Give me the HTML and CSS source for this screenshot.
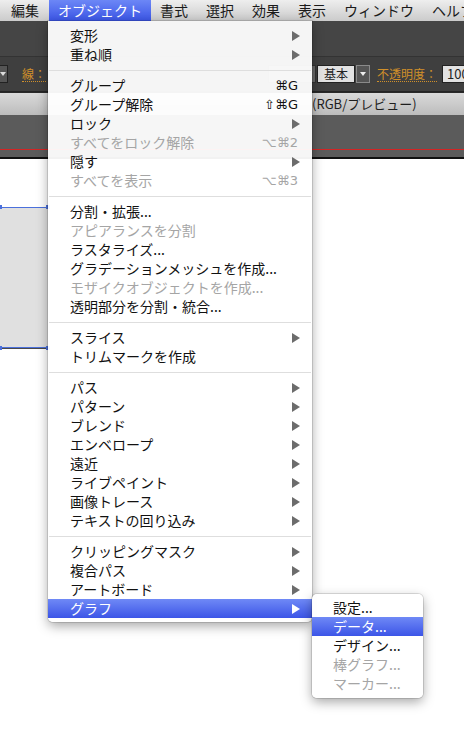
FILE: index.html
```html
<!DOCTYPE html>
<html lang="ja">
<head>
<meta charset="utf-8">
<link rel="stylesheet" href="styles.css">
</head>
<body>
<div class="page">
  <div class="menubar">
    <span class="mb-item first">編集</span>
    <span class="mb-item active">オブジェクト</span>
    <span class="mb-item">書式</span>
    <span class="mb-item">選択</span>
    <span class="mb-item">効果</span>
    <span class="mb-item">表示</span>
    <span class="mb-item">ウィンドウ</span>
    <span class="mb-item">ヘルプ</span>
  </div>
  <div class="appbar"></div>
  <div class="controlbar">
    <span class="ctl-dd-left"></span>
    <span class="ctl-label stroke">線：</span>
    <span class="ctl-field faint-field"></span>
    <span class="ctl-field basic">基本</span>
    <span class="ctl-dd"></span>
    <span class="ctl-label opacity">不透明度：</span>
    <span class="ctl-field pct">100%</span>
  </div>
  <div class="tabbar"><span class="doc-title">(RGB/プレビュー)</span></div>
  <div class="docarea"><div class="guide"></div></div>
  <div class="canvas">
    <div class="artwork">
      <span class="handle tl"></span><span class="handle tr"></span>
      <span class="handle bl"></span><span class="handle br"></span>
    </div>
  </div>
</div>

<div class="menu">
  <div class="item"><span>変形</span><i class="arrow"></i></div>
  <div class="item"><span>重ね順</span><i class="arrow"></i></div>
  <div class="sep"></div>
  <div class="item"><span>グループ</span><span class="key">⌘G</span></div>
  <div class="item"><span>グループ解除</span><span class="key">⇧⌘G</span></div>
  <div class="item"><span>ロック</span><i class="arrow"></i></div>
  <div class="item dis"><span>すべてをロック解除</span><span class="key">⌥⌘2</span></div>
  <div class="item"><span>隠す</span><i class="arrow"></i></div>
  <div class="item dis"><span>すべてを表示</span><span class="key">⌥⌘3</span></div>
  <div class="sep"></div>
  <div class="item"><span>分割・拡張...</span></div>
  <div class="item dis"><span>アピアランスを分割</span></div>
  <div class="item"><span>ラスタライズ...</span></div>
  <div class="item"><span>グラデーションメッシュを作成...</span></div>
  <div class="item dis"><span>モザイクオブジェクトを作成...</span></div>
  <div class="item"><span>透明部分を分割・統合...</span></div>
  <div class="sep"></div>
  <div class="item"><span>スライス</span><i class="arrow"></i></div>
  <div class="item"><span>トリムマークを作成</span></div>
  <div class="sep"></div>
  <div class="item"><span>パス</span><i class="arrow"></i></div>
  <div class="item"><span>パターン</span><i class="arrow"></i></div>
  <div class="item"><span>ブレンド</span><i class="arrow"></i></div>
  <div class="item"><span>エンベロープ</span><i class="arrow"></i></div>
  <div class="item"><span>遠近</span><i class="arrow"></i></div>
  <div class="item"><span>ライブペイント</span><i class="arrow"></i></div>
  <div class="item"><span>画像トレース</span><i class="arrow"></i></div>
  <div class="item"><span>テキストの回り込み</span><i class="arrow"></i></div>
  <div class="sep"></div>
  <div class="item"><span>クリッピングマスク</span><i class="arrow"></i></div>
  <div class="item"><span>複合パス</span><i class="arrow"></i></div>
  <div class="item"><span>アートボード</span><i class="arrow"></i></div>
  <div class="item sel"><span>グラフ</span><i class="arrow"></i></div>
</div>

<div class="submenu">
  <div class="item"><span>設定...</span></div>
  <div class="item sel"><span>データ...</span></div>
  <div class="item"><span>デザイン...</span></div>
  <div class="item dis"><span>棒グラフ...</span></div>
  <div class="item dis"><span>マーカー...</span></div>
</div>
</body>
</html>
```

FILE: styles.css
```css
html, body {
  margin: 0;
  padding: 0;
}
body {
  width: 464px;
  height: 729px;
  overflow: hidden;
  position: relative;
  background: #fff;
  font-family: "Noto Sans CJK JP", "Noto Sans", "DejaVu Sans", sans-serif;
  color: #111;
}
.page {
  display: flex;
  flex-direction: column;
  height: 729px;
}

/* menu bar */
.menubar {
  height: 21px;
  flex: none;
  display: flex;
  align-items: stretch;
  background: linear-gradient(#eeeeee, #cbcbcb);
  font-size: 14px;
  line-height: 21px;
  white-space: nowrap;
  overflow: hidden;
}
.mb-item {
  padding: 0 9px;
  color: #1a1a1a;
}
.mb-item.first {
  padding-left: 11px;
  padding-right: 10px;
}
.mb-item.active {
  color: #fff;
  background: linear-gradient(#6c87f6, #3b55e6);
}

/* dark application bars */
.appbar {
  height: 35px;
  flex: none;
  background: #454545;
  border-bottom: 1px solid #333;
}
.controlbar {
  height: 34px;
  flex: none;
  background: #3f3f3f;
  border-bottom: 1px solid #252525;
  display: flex;
  align-items: center;
  font-size: 12px;
  white-space: nowrap;
  overflow: hidden;
}
.ctl-dd-left {
  width: 7px;
  height: 16px;
  background: #555;
  border: 1px solid #222;
  border-left: none;
  position: relative;
  flex: none;
}
.ctl-dd-left::after {
  content: "";
  position: absolute;
  left: 0;
  top: 6px;
  border-top: 4px solid #ddd;
  border-left: 3px solid transparent;
  border-right: 3px solid transparent;
}
.ctl-label {
  color: #d1902a;
  border-bottom: 1px dotted #d1902a;
  line-height: 15px;
  flex: none;
}
.ctl-label.stroke { margin-left: 14px; }
.ctl-label.opacity { margin-left: 7px; }
.ctl-field {
  height: 16px;
  background: #e2e2e2;
  border: 1px solid #222;
  color: #222;
  line-height: 16px;
  flex: none;
}
.faint-field {
  width: 46px;
  margin-left: 222px;
  background: #6a6a6a;
  border-color: #333;
}
.basic {
  width: 36px;
  text-align: center;
  margin-left: 1px;
}
.ctl-dd {
  width: 12px;
  height: 16px;
  margin-left: 1px;
  background: #555;
  border: 1px solid #8a8a8a;
  position: relative;
  flex: none;
}
.ctl-dd::after {
  content: "";
  position: absolute;
  left: 3px;
  top: 6px;
  border-top: 4px solid #eee;
  border-left: 3px solid transparent;
  border-right: 3px solid transparent;
}
.pct {
  margin-left: 5px;
  width: 40px;
  padding-left: 4px;
  font-size: 13px;
}

.tabbar {
  height: 22px;
  flex: none;
  background: linear-gradient(#dadada, #bcbcbc);
  border-top: 1px solid #2a2a2a;
  font-size: 13px;
  line-height: 22px;
  white-space: nowrap;
  overflow: hidden;
}
.doc-title {
  padding-left: 312px;
  color: #1e1e1e;
}
.docarea {
  height: 42px;
  flex: none;
  background: #5b5b5b;
  border-bottom: 2px solid #111;
  display: flex;
  flex-direction: column;
  justify-content: flex-end;
}
.guide {
  height: 1px;
  background: #d42424;
  margin-bottom: 7px;
}
.canvas {
  flex: 1;
  position: relative;
  background: #fff;
}
.artwork {
  position: absolute;
  left: 0;
  top: 48px;
  width: 48px;
  height: 139px;
  background: #e0e0e0;
  border-top: 1px solid #4b70dc;
  border-bottom: 1px solid #4b70dc;
  box-shadow: 0 1px 0 #4a4a4a;
}
.handle {
  position: absolute;
  width: 4px;
  height: 4px;
  background: #4b70dc;
}
.handle.tl { left: -2px; top: -3px; }
.handle.tr { right: -2px; top: -3px; }
.handle.bl { left: -2px; bottom: -3px; }
.handle.br { right: -2px; bottom: -3px; }

/* drop-down menu */
.menu, .submenu {
  position: absolute;
  background: rgba(255, 255, 255, 0.95);
  box-shadow: 0 4px 12px rgba(0, 0, 0, 0.35), 0 0 0 1px rgba(0, 0, 0, 0.12);
  font-size: 14px;
  white-space: nowrap;
}
.menu {
  left: 48px;
  top: 21px;
  width: 264px;
  padding: 5px 0 4px;
  border-radius: 0 0 5px 5px;
}
.submenu {
  left: 312px;
  top: 594px;
  width: 111px;
  padding: 4px 0 5px;
  border-radius: 5px;
}
.item {
  height: 19px;
  line-height: 19px;
  display: flex;
  align-items: center;
  justify-content: space-between;
  padding: 0 12px 0 22px;
  color: #111;
}
.submenu .item { padding-left: 21px; }
.item.dis { color: #a5a5a5; }
.item.sel {
  color: #fff;
  background: linear-gradient(#6f89f6, #3c55e7);
}
.key {
  margin-right: 2px;
  font-family: "DejaVu Sans", "Noto Sans CJK JP", sans-serif;
  font-size: 13px;
}
.arrow {
  width: 0;
  height: 0;
  border-left: 8px solid #6c6c6c;
  border-top: 5px solid transparent;
  border-bottom: 5px solid transparent;
}
.item.sel .arrow { border-left-color: #fff; }
.sep {
  height: 1px;
  background: #dedede;
  margin: 6px 1px 5px;
}
```
